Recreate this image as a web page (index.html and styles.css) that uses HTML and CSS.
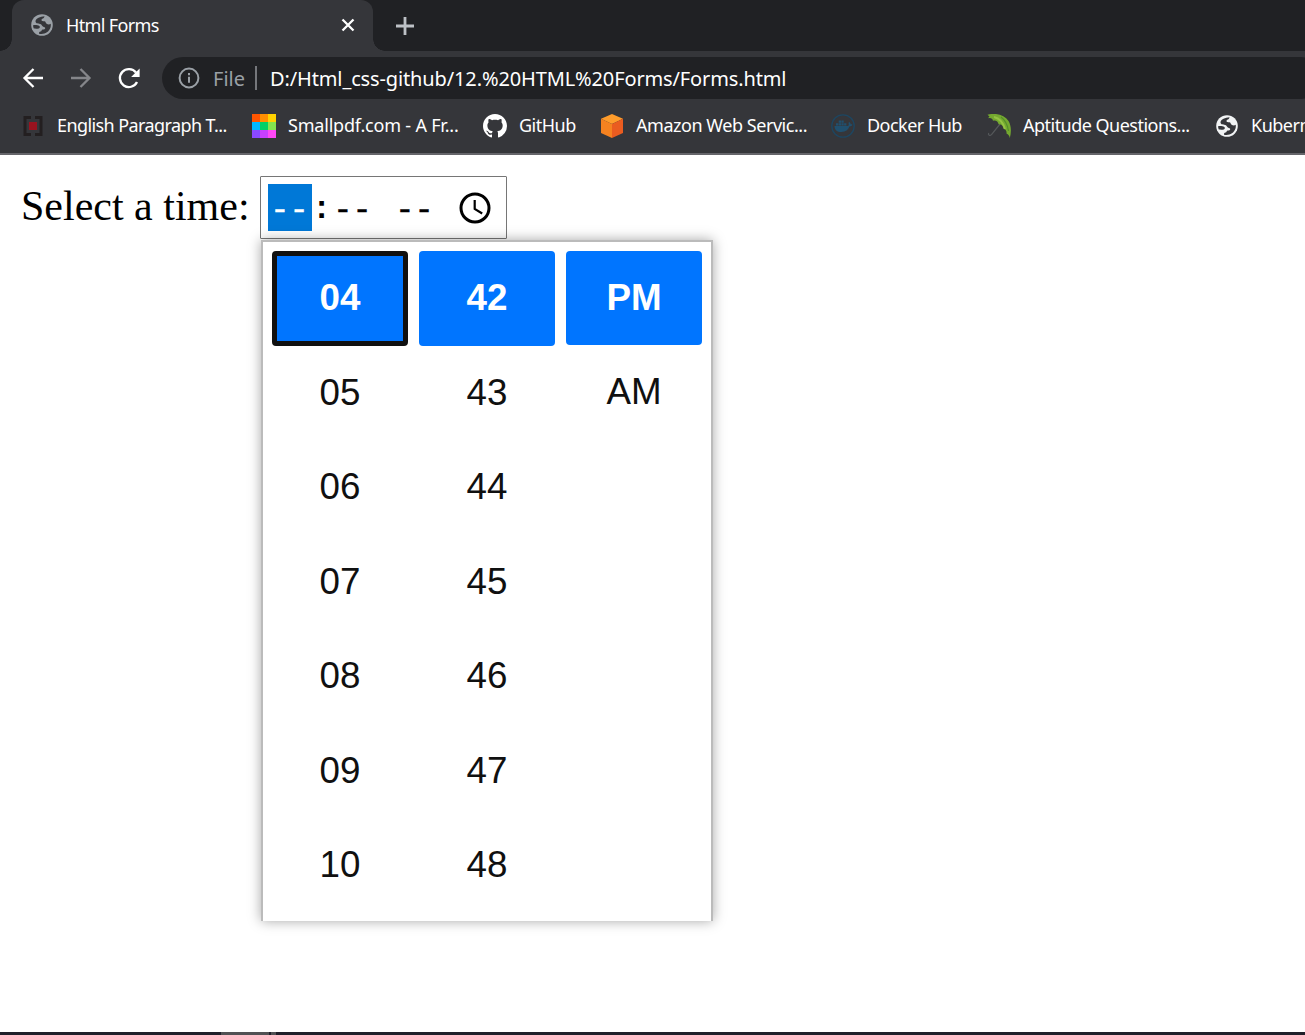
FILE: index.html
```
<!DOCTYPE html>
<html lang="en">
<head>
<meta charset="utf-8">
<title>Html Forms</title>
<link rel="stylesheet" href="styles.css">
</head>
<body>
<svg class="defs" width="0" height="0"><symbol id="globe" viewBox="0 0 24 24"><circle cx="12" cy="12" r="10.800"/><path fill="#35363a" d="M14.500 3.300C10.500 3.600 5.600 5.300 5.500 8.300c0 2.300 2.500 2.500 4.600 2.600 1.500.1 1.600 1.900 2.800 2.500 1.300.7 2.200.5 2.300 1.500.1 1.200-1.200 1.500-2.300 1.600-1.600.2-1 1.700-2.400 2.100-1.200.4-1.600 1-1.500 2.100 4.800 1.300 9.800-1.300 11.400-5.900.5-1.500.5-2.700.3-4-1.300.9-2.900.8-4.100-.1-1.100-.8-.8-2.400-2.200-2.500-1.200-.1-2.800.4-2.900-1.100-.1-1.400 2.800-1.400 3-3.800zM3.100 12.300c1.900-.4 4.900-.2 6.200.8.9.7.7 2-.5 2.300-1.800.4-3.600.3-5 .1-.5-1-.7-2.100-.7-3.200z"/></symbol></svg>
<header class="browser">
  <div class="tabs">
    <div class="tab">
      <svg class="icon muted" viewBox="0 0 24 24"><use href="#globe"/></svg>
      <span class="tab-title">Html Forms</span>
      <svg class="close" viewBox="0 0 14 14"><path d="M1.500 1.500l11 11M12.500 1.500l-11 11"/></svg>
    </div>
    <svg class="plus" viewBox="0 0 18 18"><path d="M9 0v18M0 9h18"/></svg>
  </div>
  <nav class="toolbar">
    <svg class="nav" viewBox="0 0 24 24"><path d="M22 12H3.500M12.500 3L3.500 12l9 9"/></svg>
    <svg class="nav off" viewBox="0 0 24 24"><path d="M2 12h18.500M11.500 3l9 9-9 9"/></svg>
    <svg class="nav" viewBox="0 0 24 24"><path d="M19 6.500A9 9 0 1 0 20 16"/><path class="solid" d="M22.600 2.500v8.500h-8.500z"/></svg>
    <div class="address">
      <svg class="info" viewBox="0 0 22 22"><circle cx="11" cy="11" r="9.400"/><path d="M11 9.800v6M11 6v2.200"/></svg>
      <span class="scheme">File</span><i class="bar"></i><span class="url">D:/Html_css-github/12.%20HTML%20Forms/Forms.html</span>
    </div>
  </nav>
  <div class="bookmarks">
    <a class="mark"><svg class="icon" viewBox="0 0 24 24"><path d="M10 3.500H4v17h6M14 3.500h6v17h-6" fill="none" stroke="#231f20" stroke-width="3"/><path d="M8 8h8v8H8z" fill="#98131f"/></svg><span class="label wide l1">English Paragraph T...</span></a>
    <a class="mark"><svg class="icon" viewBox="0 0 24 24" shape-rendering="crispEdges"><path fill="#ff5500" d="M0 0h8v8H0z"/><path fill="#ff8e00" d="M8 0h8v8H8z"/><path fill="#ffd200" d="M16 0h8v8h-8z"/><path fill="#00b8ff" d="M0 8h8v8H0z"/><path fill="#00d066" d="M8 8h8v8H8z"/><path fill="#83e44e" d="M16 8h8v8h-8z"/><path fill="#8a48ff" d="M0 16h8v8H0z"/><path fill="#c840ff" d="M8 16h8v8H8z"/><path fill="#ff48f6" d="M16 16h8v8h-8z"/></svg><span class="label wide l2">Smallpdf.com - A Fr...</span></a>
    <a class="mark"><svg class="icon" viewBox="0 0 16 16"><path fill="#fff" d="M8 0C3.580 0 0 3.580 0 8c0 3.540 2.290 6.530 5.470 7.590.4.070.55-.17.55-.38 0-.19-.01-.82-.01-1.490-2.010.37-2.530-.49-2.690-.94-.09-.23-.48-.94-.82-1.130-.28-.15-.68-.52-.01-.53.63-.01 1.080.58 1.230.82.72 1.210 1.870.87 2.330.66.070-.52.28-.87.51-1.070-1.780-.2-3.640-.89-3.640-3.950 0-.87.31-1.590.82-2.150-.08-.2-.36-1.020.08-2.120 0 0 .67-.21 2.200.82.640-.18 1.320-.27 2-.27s1.360.09 2 .27c1.530-1.040 2.200-.82 2.200-.82.440 1.100.160 1.920.080 2.120.51.56.82 1.270.82 2.150 0 3.070-1.870 3.750-3.650 3.950.29.25.54.73.54 1.480 0 1.070-.01 1.930-.01 2.200 0 .21.15.46.55.38A8.010 8.010 0 0 0 16 8c0-4.420-3.580-8-8-8z"/></svg><span class="label short l3">GitHub</span></a>
    <a class="mark"><svg class="icon" viewBox="0 0 24 24"><path fill="#ff9c2b" d="M12 0l11 4.800L12 10 1 4.800z"/><path fill="#f58220" d="M1 4.800L12 10v14L1 19z"/><path fill="#ea5c20" d="M23 4.800L12 10v14l11-5z"/></svg><span class="label wide l4">Amazon Web Servic...</span></a>
    <a class="mark"><svg class="icon" viewBox="0 0 24 24"><circle cx="12" cy="12" r="11.200" fill="none" stroke="#1d4661" stroke-width="1.300"/><path fill="#20506f" d="M3.500 12h13.500c1-.6 1-2 .4-3l.8-.9c1 .6 1.300 1.300 1.400 2.100 1 0 1.500.1 1.900.5-.7 1.300-1.700 1.600-2.900 1.600-1.500 3.800-4 5.700-8.200 5.700C6 18 3.700 16 3.500 12zM5 9.200h2.300v2.300H5zM7.700 9.200H10v2.300H7.700zM10.400 9.200h2.300v2.300h-2.300zM13.100 9.200h2.300v2.300h-2.300zM7.700 6.600H10v2.200H7.700zM10.400 6.600h2.300v2.200h-2.300z"/></svg><span class="label docker l5">Docker Hub</span></a>
    <a class="mark"><svg class="icon" viewBox="0 0 24 24"><path d="M13 10L4.500 20.500c-1.500 2-3.800.5-2.800-1.500" fill="none" stroke="#55585a" stroke-width="1.200"/><path fill="#75a930" d="M.5.700C9-1.500 17.500.8 21.500 7c2.800 4.500 3 11 1.300 17-.5-2.400-1.500-3.700-3.200-4.200.2-2.500-.9-4.500-3-5-.3-2.700-2-4.600-5-4.500C11 7.500 9 6 6 6.800 5.500 4 3.500 3.500 1 4.200l1.500-1.800z"/><path d="M7 3c6 1.500 9 5 11 12" fill="none" stroke="#95c344" stroke-width="2"/><path d="M14 3c4 3 6.500 7 7.500 14" fill="none" stroke="#558e2a" stroke-width="1.200"/></svg><span class="label apt l6">Aptitude Questions...</span></a>
    <a class="mark"><svg class="icon light" viewBox="0 0 24 24"><use href="#globe"/></svg><span class="label l7">Kubern</span></a>
  </div>
</header>
<main class="page">
  <label class="prompt">Select a time:</label>
  <div class="field">
    <span class="part hour">--</span><span class="colon">:</span><span class="part">--</span><span class="part meridiem">--</span>
    <svg class="clock" viewBox="0 0 32 32"><circle cx="16" cy="16" r="14"/><path d="M15.700 8v9l7.500 4.500" stroke-width="2.200"/></svg>
    <div class="picker">
      <div class="column"><b class="cell focused">04</b><span class="cell">05</span><span class="cell">06</span><span class="cell">07</span><span class="cell">08</span><span class="cell">09</span><span class="cell">10</span></div>
      <div class="column"><b class="cell">42</b><span class="cell">43</span><span class="cell">44</span><span class="cell">45</span><span class="cell">46</span><span class="cell">47</span><span class="cell">48</span></div>
      <div class="column period"><b class="cell">PM</b><span class="cell">AM</span></div>
    </div>
  </div>
</main>
<footer class="taskbar"><i class="task"></i><i class="task-edge"></i></footer>
</body>
</html>
```
FILE: styles.css
```
* { box-sizing: border-box; }
body { margin: 0; width: 1305px; height: 1035px; overflow: hidden; background: #fff; display: flex; flex-direction: column; }
svg { display: block; flex: none; }
.defs { position: absolute; }
.browser { height: 155px; flex: none; background: #35363a; border-bottom: 2px solid #65656a; color: #fff; font-family: "Noto Sans", "Open Sans", sans-serif; overflow: hidden; }
.tabs { height: 51px; background: #202124; display: flex; align-items: center; }
.tab { position: relative; width: 361px; height: 51px; margin-left: 12px; padding: 0 18px 1px 18px; background: #35363a; border-radius: 12px 12px 0 0; display: flex; align-items: center; }
.tab::before, .tab::after { content: ""; position: absolute; bottom: 0; width: 12px; height: 12px; }
.tab::before { left: -12px; background: radial-gradient(circle at 0 0, #202124 11.500px, #35363a 12px); }
.tab::after { right: -12px; background: radial-gradient(circle at 100% 0, #202124 11.500px, #35363a 12px); }
.icon { width: 24px; height: 24px; }
.muted { fill: #9aa0a6; }
.light { fill: #f1f3f4; }
.tab-title { margin-left: 12px; font-size: 18px; letter-spacing: -.65px; white-space: nowrap; }
.close { width: 14px; height: 14px; margin-left: auto; stroke: #fff; stroke-width: 2.300; }
.plus { width: 18px; height: 18px; margin-left: 23px; stroke: #bdc1c6; stroke-width: 2.800; }
.toolbar { height: 53px; display: flex; align-items: center; gap: 24px; padding-left: 21px; }
.nav { width: 24px; height: 24px; fill: none; stroke: #fff; stroke-width: 2.300; }
.off { stroke: #85868a; }
.solid { fill: #fff; stroke: none; }
.address { width: 1160px; height: 42px; flex: none; margin-left: -3px; margin-top: 1px; padding-left: 16px; border-radius: 21px; background: #202124; display: flex; align-items: center; font-size: 20px; white-space: nowrap; }
.info { width: 22px; height: 22px; fill: none; stroke: #9aa0a6; stroke-width: 2; }
.scheme { width: 32px; margin-left: 13px; color: #9aa0a6; }
.bar { width: 2px; height: 24px; margin-left: 10px; background: #75777b; }
.url { margin-left: 13px; letter-spacing: -.13px; }
.bookmarks { display: flex; gap: 24px; height: 44px; align-items: center; padding-left: 21px; }
.mark { display: flex; gap: 12px; align-items: center; flex: none; }
.label { font-size: 18px; line-height: 24px; letter-spacing: -.4px; white-space: nowrap; padding-bottom: 2px; }
.l1 { letter-spacing: -.59px; }
.l2 { letter-spacing: -.2px; }
.l3 { letter-spacing: -.5px; }
.l4 { letter-spacing: -.46px; }
.l5, .l6 { letter-spacing: -.52px; }
.l7 { letter-spacing: -.5px; }
.wide { width: 171px; }
.short { width: 57px; }
.docker { width: 96px; }
.apt { width: 168px; }
.page { flex: 1; display: flex; align-items: flex-start; padding: 21px 0 0 21px; color: #000; }
.prompt { width: 239px; padding-top: 6px; font: 42px/48px "Liberation Serif", serif; white-space: nowrap; }
.field { position: relative; width: 247px; height: 63px; border: 1px solid #767676; border-radius: 1px; display: flex; align-items: center; padding-left: 7px; font: 32px/53px "Liberation Mono", monospace; }
.part { width: 44px; height: 47px; padding-right: 1px; text-align: center; -webkit-text-stroke: .5px; }
.hour { background: #0078d7; color: #fff; }
.colon { width: 19px; height: 47px; line-height: 51px; text-align: center; font-weight: bold; }
.meridiem { margin-left: 19px; padding-right: 3px; }
.clock { width: 32px; height: 32px; margin-left: 21px; fill: none; stroke: #000; stroke-width: 3; }
.picker { position: absolute; left: 0; top: 63px; width: 452px; height: 681px; padding: 9px; border: 2px solid #bbb; border-bottom: 0; background: #fff; display: flex; gap: 11px; color: #101010; font: 36.750px/42px "Liberation Sans", Arial, sans-serif; box-shadow: 0 0 12px rgba(0,0,0,.35); }
.column { width: 136px; }
.cell { display: flex; height: 94.500px; align-items: center; justify-content: center; border-radius: 4px; }
b.cell { background: #0075ff; color: #fff; }
.focused { border: 5px solid #101010; }
.period .cell { height: 94px; }
.taskbar { height: 3px; flex: none; background: #1f1f2a; display: flex; }
.task { width: 48px; margin-left: 221px; background: #515154; }
.task-edge { width: 5px; margin-left: 2px; background: #515154; }
```
